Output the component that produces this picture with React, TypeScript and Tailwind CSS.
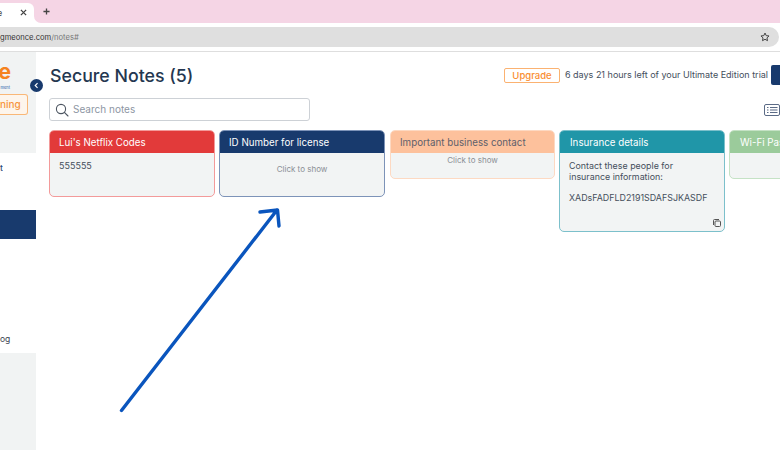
import React from "react";

const font = { fontFamily: "Inter, 'Liberation Sans', sans-serif" };

function Card({ title, head, border, titleClass = "text-white pl-[9px]", h, w = "w-[166px]", children }: { title: string; head: string; border: string; titleClass?: string; h: string; w?: string; children: React.ReactNode }) {
  return (
    <div className={`${w} ${h} shrink-0 rounded-[5px] border ${border} bg-[#f2f4f4] overflow-hidden flex flex-col`}>
      <div className={`${head} ${titleClass} h-[22px] shrink-0 pt-[1px] text-[9.75px] leading-[22px] whitespace-nowrap`}>{title}</div>
      <div className="flex-1 relative min-h-0">{children}</div>
    </div>
  );
}

export default function App() {
  return (
    <div className="relative w-[780px] h-[450px] overflow-hidden bg-white text-[#3f4a5a]" style={font}>
      {/* tab strip */}
      <div className="h-[23px] flex items-stretch">
        <div className="w-[34px] bg-[#f5d5e5] pt-[3px]">
          <div className="h-[20px] bg-white rounded-tr-[6px] flex items-center justify-between pr-[7px] text-[9px] text-[#444] overflow-hidden">
            <span className="ml-[-3px]">e</span>
            <svg width="7" height="7" viewBox="0 0 8 8" className="mb-[2px]"><path d="M1 1l6 6M7 1L1 7" stroke="#444" strokeWidth="1.500" /></svg>
          </div>
        </div>
        <div className="flex-1 bg-[#f5d5e5] rounded-bl-[7px] pl-[9px] pt-[8px]">
          <svg width="7" height="7" viewBox="0 0 8 8"><path d="M4 .5v7M.5 4h7" stroke="#444" strokeWidth="1.500" /></svg>
        </div>
      </div>
      {/* address */}
      <div className="h-[29px] bg-white border-b border-[#dedede] pt-[4px]">
        <div className="h-[20px] bg-[#dfdfdf] rounded-r-[10px] w-[779px] flex items-center justify-between pr-[9px] text-[7.6px] whitespace-nowrap">
          <span className="text-[#333] pt-[1px]">gmeonce.com<span className="text-[#777]">/notes#</span></span>
          <svg width="10" height="10" viewBox="0 0 24 24" fill="none" stroke="#444" strokeWidth="2.400" strokeLinejoin="round"><path d="M12 2.500l2.900 6.200 6.800.8-5 4.600 1.300 6.700-6-3.300-6 3.300 1.300-6.700-5-4.600 6.800-.8z" /></svg>
        </div>
      </div>
      <div className="flex h-[398px]">
        {/* sidebar */}
        <aside className="w-[36px] shrink-0 flex flex-col text-[8.5px] text-[#3a4350] overflow-hidden">
          <div className="h-[101px] bg-[#f1f3f3] flex flex-col items-start">
            <div className="h-[25px] mt-[8px] w-[11px] flex justify-end text-[21px] leading-[24px] font-bold text-[#f58220]">e</div>
            <div className="h-[5px] w-[10px] flex justify-end text-[4px] leading-[5px] text-[#1d5aa8] whitespace-nowrap">ment</div>
            <div className="mt-[4px] w-[28px] h-[21px] rounded-r-[3px] border border-l-0 border-[#f9b777] bg-[#fdf5ec] text-[10px] leading-[19px] font-medium text-[#f7963e] pl-0 overflow-hidden"><span className="block w-[17px] text-right">ning</span></div>
          </div>
          <div className="h-[200px] bg-white flex flex-col">
            <div className="h-[57px] pt-[9px] leading-[12px] text-[#2c4a78] font-medium">
              <span className="block w-[3px] overflow-hidden">t</span>
            </div>
            <div className="h-[29px] w-full bg-[#183a6d] shrink-0"></div>
            <div className="flex-1"></div>
            <div className="w-full pb-[8px] leading-[12px]">og</div>
          </div>
          <div className="flex-1 bg-[#f1f3f3]"></div>
        </aside>
        {/* content */}
        <main className="flex-1 min-w-0 pl-[13px] overflow-hidden">
          <div className="flex items-center justify-between h-[47px] pt-[1px] w-[760px]">
            <h1 className="text-[17.75px] ml-[1px] font-medium text-[#243750] whitespace-nowrap">Secure Notes (5)</h1>
            <div className="flex items-center text-[9px] whitespace-nowrap ml-[auto] mr-[18px] mb-[2px]">
              <span className="w-[56px] h-[15px] rounded-[2px] border border-[#fbb271] text-[#f98d2f] text-[9.500px] leading-[13px] text-center font-medium">Upgrade</span>
              <span className="ml-[5px] w-[202px] text-[#444e5c]">6 days 21 hours left of your Ultimate Edition trial</span>
              <span className="ml-[4px] w-[20px] h-[20px] rounded-l-[2px] bg-[#183a6d] shrink-0"></span>
            </div>
          </div>
          <div className="flex items-center h-[23px] mt-[-1px] w-[731px] justify-between">
            <div className="w-[261px] h-[23px] rounded-[3px] border border-[#cdd1d6] flex items-center pl-[5px] text-[10px] text-[#8d96a3]">
              <svg width="14" height="14" viewBox="0 0 14 14" fill="none" stroke="#4c5561" strokeWidth="1.100"><circle cx="6" cy="6" r="4.600" /><path d="M9.400 9.400l3.600 3.600" strokeLinecap="round" /></svg>
              <span className="ml-[4px]">Search notes</span>
            </div>
            <svg width="16" height="12" viewBox="0 0 16 12" fill="none" stroke="#5b6b86" className="mr-[0px]"><rect x=".5" y=".5" width="15" height="11" rx="1.500" /><path d="M3 3.500h1.500M3 6h1.500M3 8.500h1.500M6 3.500h7.500M6 6h7.500M6 8.500h7.500" strokeWidth="1.200" /></svg>
          </div>
          <div className="flex gap-[4px] mt-[9px] items-start">
            <Card title="Lui's Netflix Codes" head="bg-[#e23a3a]" border="border-[#f39a9a]" h="h-[67px]">
              <div className="pl-[9px] pt-[6px] text-[9px] text-[#454f5c]">555555</div>
            </Card>
            <Card title="ID Number for license" head="bg-[#183a6d]" border="border-[#7d93b8]" h="h-[67px]">
              <div className="pt-[10px] text-center text-[8px] text-[#8a8f94]">Click to show</div>
            </Card>
            <Card title="Important business contact" head="bg-[#fdc19c]" border="border-[#fdd9c2]" titleClass="text-[#5d5f6b] pl-[9px]" h="h-[49px]" w="w-[165px] ml-[1px]">
              <div className="pt-[1px] text-center text-[8px] text-[#8a8f94]">Click to show</div>
            </Card>
            <Card title="Insurance details" head="bg-[#2096a8]" border="border-[#7cc0cb]" titleClass="text-white pl-[10px]" h="h-[102px]">
              <div className="pl-[9px] pt-[8px] text-[8.900px] leading-[10.500px] text-[#454f5c]">
                <p>Contact these people for<br />insurance information:</p>
                <p className="mt-[10.500px]">XADsFADFLD2191SDAFSJKASDF</p>
                <svg width="8" height="8" viewBox="0 0 8 8" fill="none" stroke="#555" className="absolute right-[3px] bottom-[4px]"><rect x="2" y="2" width="5.500" height="5.500" rx="1" /><path d="M.5 6V1.500a1 1 0 0 1 1-1H6" /></svg>
              </div>
            </Card>
            <Card title="Wi-Fi Password" head="bg-[#9bcb9b]" border="border-[#c5e2c5]" titleClass="text-white pl-[10px]" h="h-[49px]"><span /></Card>
          </div>
        </main>
      </div>
      {/* chevron badge */}
      <div className="absolute left-[30px] top-[79px] w-[13px] h-[13px] rounded-full bg-[#183a6d] flex items-center justify-center">
        <svg width="7" height="7" viewBox="0 0 8 8" fill="none" stroke="#fff" strokeWidth="1.300"><path d="M5.200 1.200L2.500 4l2.700 2.800" /></svg>
      </div>
      {/* annotation arrow */}
      <svg className="absolute left-0 top-0 pointer-events-none" width="780" height="450" fill="none" stroke="#0a55bd" strokeWidth="3.400" strokeLinecap="round" strokeLinejoin="round">
        <path d="M121.500 410.500L277 210M260 212l17.500-2 1.500 16" />
      </svg>
    </div>
  );
}
